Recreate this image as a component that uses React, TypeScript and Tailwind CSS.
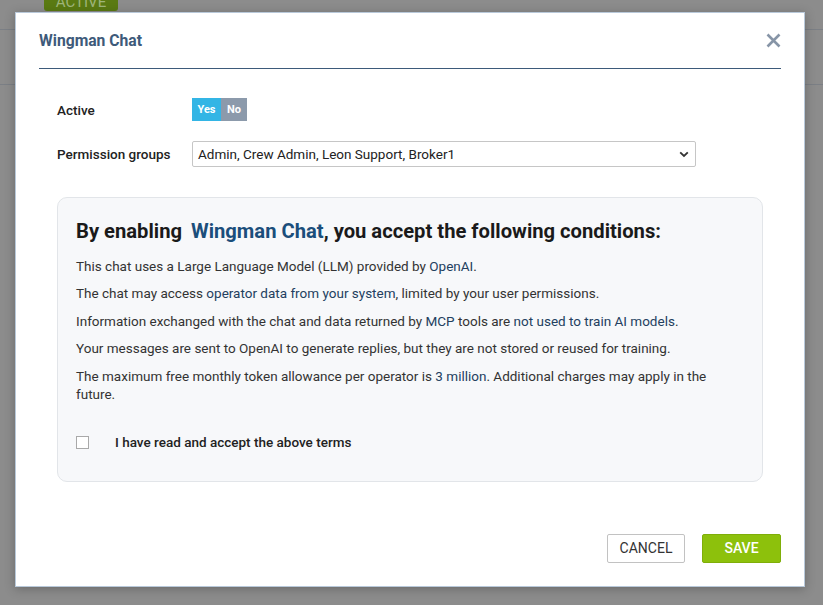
export default function App() {
  return (
    <div className="relative h-[605px] w-[823px] overflow-hidden bg-[#8c8c8c] font-['Roboto',sans-serif]">
      {/* page behind the overlay */}
      <div className="flex h-[30px] items-start border-b border-[#7b7f85] pl-[44px]">
        <span className="-mt-[12px] block w-[74px] rounded-[3px] bg-[#5a7a12] pt-[6px] text-center text-[15px] leading-[17px] text-[#9fb57a]">
          ACTIVE
        </span>
      </div>
      <div className="h-[55px] border-b border-[#7b7f85]" />

      {/* modal */}
      <div className="absolute top-[12px] left-[15px] h-[575px] w-[790px] border border-[#b9c9da] bg-white shadow-[0_2px_10px_rgba(0,0,0,0.25)]">
        <div className="mx-[23px] flex h-[56px] items-start justify-between border-b border-[#3d5a7a] pt-[17px]">
          <h2 className="text-[15.7px] leading-[22px] font-bold text-[#3e5a7a]">
            Wingman Chat
          </h2>
          <button className="mt-[3px] text-[#8795a7]">
            <svg width="15" height="15" viewBox="0 0 15 15">
              <path
                d="M1.5 1.5 13.5 13.5M13.5 1.5 1.5 13.5"
                stroke="currentColor"
                strokeWidth="2.6"
                strokeLinecap="butt"
              />
            </svg>
          </button>
        </div>

        <div className="px-[41px]">
          {/* active */}
          <div className="mt-[29px] flex items-center">
            <span className="w-[135px] pt-[2px] text-[13.5px] font-medium text-[#222]">
              Active
            </span>
            <div className="flex h-[23px] text-[11px] leading-[23px] font-bold text-white">
              <span className="w-[29px] bg-[#33b5e5] text-center">Yes</span>
              <span className="w-[26px] bg-[#8c9aab] text-center">No</span>
            </div>
          </div>

          {/* permission groups */}
          <div className="mt-[20px] flex items-center">
            <span className="w-[135px] text-[13.5px] font-medium text-[#222]">
              Permission groups
            </span>
            <div className="flex h-[26px] w-[504px] items-center justify-between rounded-[2px] border border-[#c6c6c6] pr-[6px] pl-[5px]">
              <span className="text-[13.5px] text-[#222]">
                Admin, Crew Admin, Leon Support, Broker1
              </span>
              <svg width="10" height="7" viewBox="0 0 10 7" className="text-[#333]">
                <path
                  d="M1.2 1.3 5 5 8.8 1.3"
                  fill="none"
                  stroke="currentColor"
                  strokeWidth="1.8"
                />
              </svg>
            </div>
          </div>

          {/* terms box */}
          <div className="mt-[30px] h-[285px] rounded-[10px] border border-[#e2e5e9] bg-[#f7f8fa] pt-[19px] pr-[20px] pl-[18px]">
            <h3 className="text-[20.2px] leading-[28px] font-bold text-[#1a1a1a]">
              By enabling <span className="ml-[4px] text-[#1b4e7b]">Wingman Chat</span>, you accept the following conditions:
            </h3>
            <div className="mt-[12px] flex flex-col gap-[9.4px] text-[13.5px] leading-[18px] text-[#333]">
              <p>
                This chat uses a Large Language Model (LLM) provided by{" "}
                <span className="text-[#23405f]">OpenAI</span>.
              </p>
              <p>
                The chat may access{" "}
                <span className="text-[#23405f]">operator data from your system</span>, limited by your user permissions.
              </p>
              <p>
                Information exchanged with the chat and data returned by{" "}
                <span className="text-[#23405f]">MCP</span> tools are{" "}
                <span className="text-[#23405f]">not used to train AI models</span>.
              </p>
              <p>
                Your messages are sent to OpenAI to generate replies, but they are not stored or reused for training.
              </p>
              <p>
                The maximum free monthly token allowance per operator is{" "}
                <span className="text-[#23405f]">3 million</span>. Additional charges may apply in the future.
              </p>
            </div>
            <label className="mt-[30px] flex h-[20px] items-center">
              <span className="h-[13px] w-[13px] border border-[#a9a9a9] bg-white" />
              <span className="ml-[26px] text-[13.5px] font-medium text-[#222]">
                I have read and accept the above terms
              </span>
            </label>
          </div>
        </div>

        {/* footer */}
        <div className="mt-[52px] flex justify-end gap-[17px] pr-[23px]">
          <button className="h-[29px] w-[78px] rounded-[2px] border border-[#c2c2c2] bg-white text-[14px] text-[#333]">
            CANCEL
          </button>
          <button className="h-[29px] w-[79px] rounded-[2px] border border-[#7fae09] bg-[#8dc10c] text-[14px] font-medium text-white">
            SAVE
          </button>
        </div>
      </div>
    </div>
  );
}
